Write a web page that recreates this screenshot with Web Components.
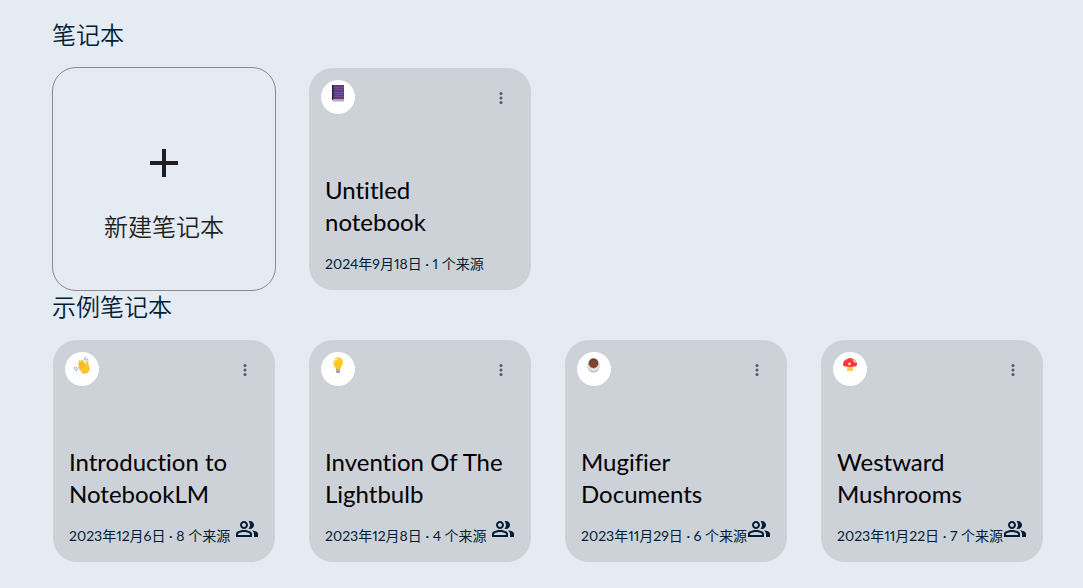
<!DOCTYPE html>
<html lang="zh-CN">
<head>
<meta charset="utf-8">
<meta name="viewport" content="width=device-width, initial-scale=1">
<title>笔记本</title>
<style>
  body { margin: 0; background: #e4ebf3; font-family: Lato, "Noto Sans CJK SC", sans-serif; color: #001d35; }
</style>
</head>
<body>
<notebook-page>
  <notebook-section heading="笔记本">
    <new-notebook label="新建笔记本"></new-notebook>
    <notebook-card icon="book" meta="2024年9月18日 · 1 个来源">Untitled notebook</notebook-card>
  </notebook-section>
  <notebook-section heading="示例笔记本">
    <notebook-card icon="wave" meta="2023年12月6日 · 8 个来源" shared>Introduction to NotebookLM</notebook-card>
    <notebook-card icon="bulb" meta="2023年12月8日 · 4 个来源" shared>Invention Of The Lightbulb</notebook-card>
    <notebook-card icon="coffee" meta="2023年11月29日 · 6 个来源" shared>Mugifier Documents</notebook-card>
    <notebook-card icon="mushroom" meta="2023年11月22日 · 7 个来源" shared>Westward Mushrooms</notebook-card>
  </notebook-section>
</notebook-page>
<script>
const icons = {
  book: `<path d="M2 0h12v14H2z" fill="#583f7f"/><path d="M2 0h1.500v15H2z" fill="#302044"/><path d="M3 14h11v2.500H3z" fill="#b8a6bd"/>
    <path d="M4.500 2.500h9M4.500 7.500h9M4.500 11.500h9" stroke="#c34c94" stroke-dasharray="1 1"/><path d="M5.500 4.500h8M5.500 9.500h8" stroke="#5280d8" stroke-dasharray="1 1"/>`,
  wave: `<g fill="none" stroke="#76a9f4" stroke-width="1" stroke-linecap="round"><path d="M10.500 1c1.500-.5 2.800.3 3.200 1.800M10.100 2.500c1.100-.3 1.900.2 2.200 1.200M.5 10.500c-.2 1.700.7 3 2.300 3.300M2.100 10c0 1.200.5 1.900 1.500 2.200"/></g>
    <path d="M8 15.400 4.300 10.900c-.8-1.200.7-2.100 1.500-1.200L4 7.300c-.8-1.300.9-2.300 1.700-1.200L4.800 4.800c-.7-1.300 1-2.200 1.800-1.100l1 1.300-.3-.8c-.5-1.200 1.100-1.900 1.800-.9l3 4 .2-2.300c.2-1.700 2.200-1.400 2.100.1l.2 2.800c1.800 3.100 1.700 5.800-.6 7.500-2.100 1.500-4.400 1.400-6 0z" fill="#ffc52f"/>
    <path d="m5.700 9.700 2.200 2.800M5.400 6.100l3.800 5M7.200 5.100l3.500 4.700" fill="none" stroke="#dc982b" stroke-width=".6"/><path d="M8 15.500c2 .9 4 .5 5.500-1" fill="none" stroke="#efa727" stroke-width=".7"/>`,
  bulb: `<path d="M8 .3a5 5 0 0 0-5 5c0 2.400 1.600 3.700 2.400 5.500l.5 1.800h4.200l.5-1.800C11.400 9 13 7.700 13 5.300a5 5 0 0 0-5-5z" fill="#ffca28"/>
    <path d="M7 2c-2 0-3.200 1.500-3 3.500" fill="none" stroke="#fff59d" stroke-width="1.500" stroke-linecap="round"/><path d="m6.500 6 1 6M9.500 6l-1 6M6.500 6.500h3" fill="none" stroke="#f6b91f" stroke-width=".6"/><path d="M6 12.300h4v2.400L9.100 16H6.900L6 14.700z" fill="#8e989e"/><path d="M6 13.500h4" stroke="#c4cbd0" stroke-width=".7"/>`,
  coffee: `<path d="M1.500 7h12v3.500c-1.500 6.700-10.500 6.700-12 0z" fill="#b5b8b8"/><circle cx="7.500" cy="8.300" r="6" fill="#e4e4e3"/><path d="M12.400 7.500c2-.6 2.200 2.200.2 2.400" fill="none" stroke="#dadada"/><circle cx="7.500" cy="6.300" r="5.300" fill="#b6afac"/><circle cx="7.500" cy="6.300" r="4.700" fill="#80442f"/><path d="M4.200 5c1.400-3 5.300-3.300 7-.3" fill="none" stroke="#5e3024" stroke-width=".7"/>`,
  mushroom: `<path d="M5.500 8.500h5c.1 2.700.8 4.200 1 5.500h-7c.5-1.400 1.100-3 1-5.500z" fill="#ffc766"/><path d="M1 8c0-4.100 3-6.800 7-6.800s7 2.700 7 6.800c0 2.500-14 2.500-14 0z" fill="#f93535"/><circle cx="7.500" cy="7" r="1.400" fill="#ffd4ce"/><path d="M3.400 3.500c.6-.9 1.200-1.200 2-1.500.5.600-.6 1.700-2 1.500zM10.700 1.900c2 .8 3.300 2.100 3.900 4-1.700.6-4.500-2.300-3.900-4z" fill="#ffb4ad"/>`
};

function render(host, markup) {
  const template = document.createElement("template");
  template.innerHTML = markup;
  host.attachShadow({ mode: "open" }).append(template.content.cloneNode(true));
}

customElements.define("notebook-page", class extends HTMLElement {
  constructor() {
    super();
    render(this, `<style>
      :host { display: block; padding: 19px 36px 24px 52px; }
    </style><main><slot></slot></main>`);
  }
});

customElements.define("notebook-section", class extends HTMLElement {
  connectedCallback() {
    if (this.shadowRoot) return;
    render(this, `<style>
      :host { display: block; }
      h2 { margin: 0 0 16px; font-size: 24px; line-height: 32px; font-weight: 350; }
      .grid { display: grid; grid-template-columns: repeat(auto-fill, 224px); gap: 32px; }
    </style><section><h2>${this.getAttribute("heading")}</h2><div class="grid"><slot></slot></div></section>`);
  }
});

customElements.define("new-notebook", class extends HTMLElement {
  connectedCallback() {
    if (this.shadowRoot) return;
    render(this, `<style>
      :host { display: block; }
      button { box-sizing: border-box; width: 100%; height: 100%; min-height: 224px; display: flex; flex-direction: column; align-items: center; justify-content: center; gap: 24px; padding: 24px 0 0; border: 1px solid #8b898c; border-radius: 24px; background: none; color: #1f1f1f; font: inherit; font-size: 24px; line-height: 32px; font-weight: 350; cursor: pointer; }
      svg { width: 48px; height: 48px; fill: currentColor; }
    </style><button type="button"><svg viewBox="0 0 24 24" aria-hidden="true"><path d="M19 13h-6v6h-2v-6H5v-2h6V5h2v6h6z"/></svg><span>${this.getAttribute("label")}</span></button>`);
  }
});

customElements.define("notebook-card", class extends HTMLElement {
  connectedCallback() {
    if (this.shadowRoot) return;
    const shared = this.hasAttribute("shared")
      ? `<svg class="shared" viewBox="0 0 24 24" aria-hidden="true"><path d="M9 12c2.210 0 4-1.790 4-4s-1.790-4-4-4-4 1.790-4 4 1.790 4 4 4zm0-6c1.100 0 2 .9 2 2s-.9 2-2 2-2-.9-2-2 .9-2 2-2zM1 17.200V20h16v-2.800c0-1.100-.6-2.100-1.600-2.600C13.800 13.700 11.500 13 9 13s-4.800.7-6.400 1.600C1.600 15.100 1 16.100 1 17.200zm2 .8v-.8c0-.35.15-.65.5-.8C5 15.600 7 15 9 15s4 .6 5.500 1.400c.35.15.5.45.5.8v.8zM13.500 11.700c.9-1 1.500-2.300 1.500-3.700s-.6-2.700-1.500-3.700c.5-.2 1-.3 1.500-.3 2.200 0 4 1.800 4 4s-1.800 4-4 4c-.5 0-1-.1-1.500-.3zM19 20v-3c0-1.500-.8-2.800-2.200-3.800 1.700.2 3.300.7 4.600 1.400 1 .5 1.600 1.400 1.600 2.400v3z"/></svg>` : "";
    render(this, `<style>
      :host { display: block; }
      article { position: relative; box-sizing: border-box; height: 100%; min-height: 224px; display: flex; flex-direction: column; justify-content: space-between; border: 1px solid transparent; border-radius: 25px; background: #cdd1d8 padding-box; }
      header { display: flex; justify-content: space-between; align-items: flex-start; padding: 12px 12px 0; }
      .badge { box-sizing: border-box; width: 34px; height: 34px; padding: 5px 9px; border-radius: 50%; background: #fff; }
      .badge svg { display: block; width: 16px; height: 16px; overflow: visible; }
      button { width: 36px; height: 36px; display: grid; place-items: center; padding: 0; border: 0; border-radius: 50%; background: none; color: #4d5a7c; cursor: pointer; }
      button svg { width: 18px; height: 18px; fill: currentColor; }
      .text { padding: 0 16px 16px; }
      h3 { margin: 0 0 16px; color: #000; font-size: 24px; line-height: 32px; font-weight: 400; font-variant-ligatures: no-common-ligatures; }
      p { margin: 0; font-size: 14px; line-height: 20px; font-weight: 400; font-variant-numeric: proportional-nums; white-space: nowrap; }
      .shared { position: absolute; right: 16px; bottom: 21px; width: 24px; height: 24px; fill: #001d35; }
    </style>
    <article>
      <header>
        <span class="badge"><svg viewBox="0 0 16 16" aria-hidden="true">${icons[this.getAttribute("icon")]}</svg></span>
        <button type="button" aria-label="更多"><svg viewBox="0 0 24 24" aria-hidden="true"><circle cx="12" cy="6" r="2"/><circle cx="12" cy="12" r="2"/><circle cx="12" cy="18" r="2"/></svg></button>
      </header>
      <div class="text"><h3><slot></slot></h3><p>${this.getAttribute("meta")}</p></div>
      ${shared}
    </article>`);
  }
});
</script>
</body>
</html>
